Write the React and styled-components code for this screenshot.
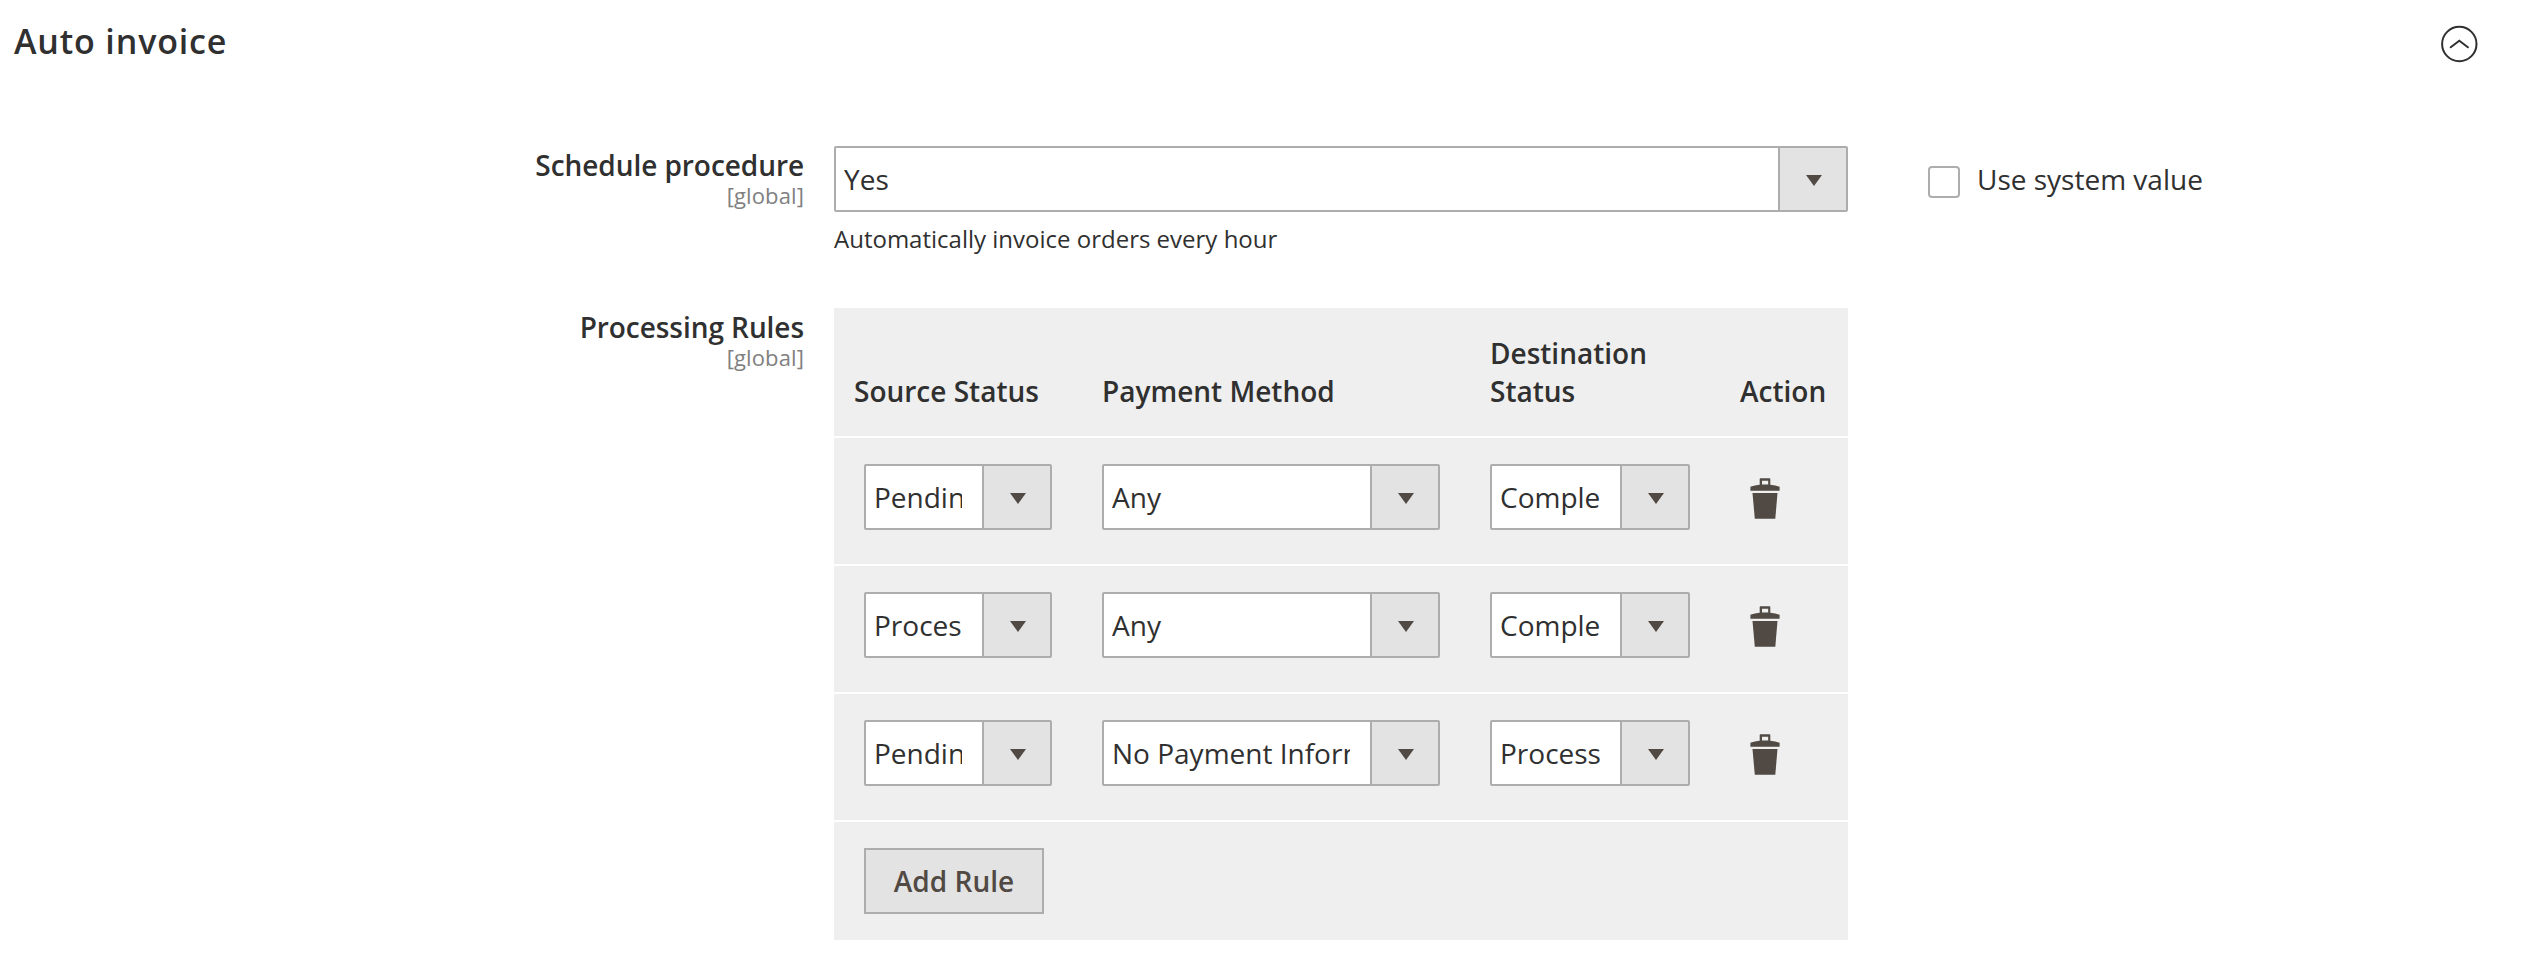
import React from "react";
import styled, { createGlobalStyle } from "styled-components";

const GlobalStyle = createGlobalStyle`
  * { box-sizing: border-box; }
  body {
    margin: 0;
    background: #fff;
    color: #303030;
    font-family: "Open Sans", "Noto Sans", sans-serif;
    font-size: 28px;
    line-height: 38px;
  }
`;

const Section = styled.section`
  width: 2526px;
  height: 974px;
  overflow: hidden;
`;

const SectionHeader = styled.header`
  display: flex;
  justify-content: space-between;
  align-items: flex-start;
  height: 146px;
  padding: 18px 48px 0 14px;
`;

const Title = styled.h2`
  margin: 0;
  font-size: 34px;
  font-weight: 600;
  line-height: 46px;
  letter-spacing: 0.025em;
`;

const CollapseButton = styled.button`
  display: flex;
  margin: 7px 0 0;
  padding: 0;
  border: 0;
  background: none;
`;

const Field = styled.div`
  display: grid;
  grid-template-columns: 804px 1014px 1fr;
  column-gap: 30px;
  height: ${(p) => p.$height || "auto"};
`;

const FieldLabel = styled.div`
  text-align: right;
  font-weight: 600;
  letter-spacing: -0.06px;
`;

const Scope = styled.div`
  margin-top: -4px;
  color: #808080;
  font-size: 22px;
  font-weight: 400;
  line-height: 30px;
  letter-spacing: 0.12px;
`;

const Note = styled.p`
  margin: 11px 0 0;
  font-size: 24px;
  line-height: 32px;
`;

const SelectBox = styled.div`
  display: flex;
  width: ${(p) => p.$width};
  height: 66px;
  border: 2px solid #adadad;
  border-radius: 2px;
  background: #fff;
`;

const SelectValue = styled.div`
  flex: 1;
  min-width: 0;
  margin: 12px 20px 12px 8px;
  overflow: hidden;
  white-space: nowrap;
`;

const SelectArrow = styled.div`
  flex: none;
  width: 68px;
  padding: 27px 0 0 26px;
  border-left: 2px solid #adadad;
  background: #e3e3e3;
  line-height: 0;
`;

const SystemValue = styled.label`
  display: flex;
  align-items: flex-start;
  padding: 14px 0 0 50px;
`;

const Checkbox = styled.input`
  appearance: none;
  width: 32px;
  height: 32px;
  margin: 6px 17px 0 0;
  border: 2px solid #adadad;
  border-radius: 4px;
  background: #fff;
`;

const Rules = styled.div`
  display: flex;
  flex-direction: column;
  gap: 2px;
`;

const RuleRow = styled.div`
  display: grid;
  grid-template-columns: 268px 388px 250px 108px;
  height: 126px;
  padding-top: 26px;
  background: #efefef;
`;

const RuleHead = styled(RuleRow)`
  height: 128px;
  align-items: end;
  padding: 0 0 26px;
  font-weight: 600;
`;

const HeadCell = styled.div`
  padding: 0 40px 0 ${(p) => (p.$first ? "20px" : "0")};
  ${(p) => p.$last && "padding-right: 0;"}
`;

const Cell = styled.div`
  padding-left: ${(p) => p.$indent || "0"};
`;

const DeleteButton = styled.button`
  display: block;
  margin: 14px 0 0 10px;
  padding: 0;
  border: 0;
  background: none;
  line-height: 0;
`;

const RuleFooter = styled.div`
  height: 118px;
  padding: 26px 30px;
  background: #efefef;
`;

const AddButton = styled.button`
  display: block;
  width: 180px;
  height: 66px;
  padding: 0;
  border: 2px solid #adadad;
  background: #e3e3e3;
  color: #514943;
  font: 600 28px/38px "Open Sans", "Noto Sans", sans-serif;
`;

function Select({ value, width }) {
  return (
    <SelectBox $width={width}>
      <SelectValue>{value}</SelectValue>
      <SelectArrow>
        <svg width="16" height="11" viewBox="0 0 16 11">
          <path d="M0 0H16L8 11Z" fill="#514943" />
        </svg>
      </SelectArrow>
    </SelectBox>
  );
}

function TrashIcon() {
  return (
    <svg width="30" height="41" viewBox="0 0 30 41" fill="#514943">
      <path
        fillRule="evenodd"
        d="M10.5 .3H19.500Q20.300 .3 20.300 1.100V6.800Q25.500 7.200 29.600 8.700V12.800H.4V8.700Q4.500 7.200 9.700 6.800V1.100Q9.700 .3 10.500 .3ZM12 2.800V6.600H18.200V2.800Z"
      />
      <path d="M2.500 15H27.500L25.300 40.700H4.800Z" />
    </svg>
  );
}

const rules = [
  { source: "Pending", payment: "Any", destination: "Complete" },
  { source: "Processing", payment: "Any", destination: "Complete" },
  { source: "Pending", payment: "No Payment Information Required", destination: "Processing" },
];

export default function App() {
  return (
    <>
      <GlobalStyle />
      <Section>
        <SectionHeader>
          <Title>Auto invoice</Title>
          <CollapseButton aria-label="Collapse">
            <svg width="38" height="38" viewBox="0 0 38 38" fill="none" stroke="#303030" strokeWidth="2">
              <circle cx="19.3" cy="19" r="17.2" />
              <path d="M10.7 22.300L19.300 15.800L27.900 22.300" strokeLinecap="round" />
            </svg>
          </CollapseButton>
        </SectionHeader>
        <Field $height="162px">
          <FieldLabel>
            Schedule procedure
            <Scope>[global]</Scope>
          </FieldLabel>
          <div>
            <Select value="Yes" width="1014px" />
            <Note>Automatically invoice orders every hour</Note>
          </div>
          <SystemValue>
            <Checkbox type="checkbox" />
            Use system value
          </SystemValue>
        </Field>
        <Field>
          <FieldLabel>
            Processing Rules
            <Scope>[global]</Scope>
          </FieldLabel>
          <Rules>
            <RuleHead>
              <HeadCell $first>Source Status</HeadCell>
              <HeadCell>Payment Method</HeadCell>
              <HeadCell>Destination Status</HeadCell>
              <HeadCell $last>Action</HeadCell>
            </RuleHead>
            {rules.map((rule, i) => (
              <RuleRow key={i}>
                <Cell $indent="30px">
                  <Select value={rule.source} width="188px" />
                </Cell>
                <Cell>
                  <Select value={rule.payment} width="338px" />
                </Cell>
                <Cell>
                  <Select value={rule.destination} width="200px" />
                </Cell>
                <Cell>
                  <DeleteButton aria-label="Delete">
                    <TrashIcon />
                  </DeleteButton>
                </Cell>
              </RuleRow>
            ))}
            <RuleFooter>
              <AddButton>Add Rule</AddButton>
            </RuleFooter>
          </Rules>
        </Field>
      </Section>
    </>
  );
}
